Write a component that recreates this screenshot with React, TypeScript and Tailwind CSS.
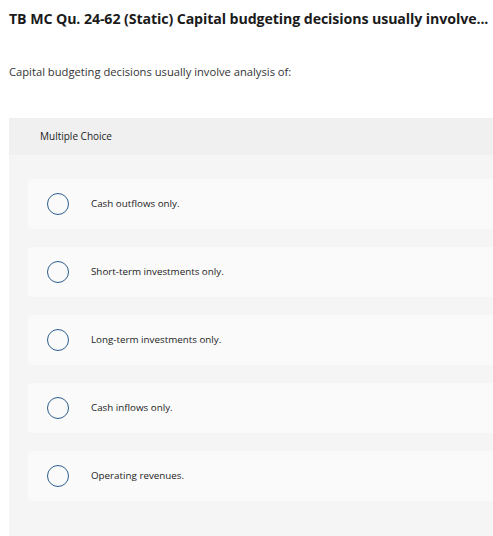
const choices = [
  "Cash outflows only.",
  "Short-term investments only.",
  "Long-term investments only.",
  "Cash inflows only.",
  "Operating revenues.",
];

export default function App() {
  return (
    <div className="w-[493px] h-[536px] overflow-hidden bg-white text-[#1b1b1b]" style={{ fontFamily: "'Open Sans', sans-serif" }}>
      <div className="pl-[9px] pt-[9px]">
        <h1 className="text-[14.2px] font-bold leading-[20px] whitespace-nowrap tracking-[-0.1px]">
          TB MC Qu. 24-62 (Static) Capital budgeting decisions usually involve...
        </h1>
      </div>
      <p className="pl-[9px] mt-[36px] text-[11.2px] leading-[14px] text-[#333]">
        Capital budgeting decisions usually involve analysis of:
      </p>
      <div className="ml-[9px] mt-[39px] bg-[#f5f5f5] min-h-[420px]">
        <div className="h-[37px] bg-[#f0f0f0] flex items-center pl-[31px] text-[10px] text-[#222]">
          Multiple Choice
        </div>
        <div className="pt-[24px] pl-[19px] flex flex-col gap-[18px]">
          {choices.map((c) => (
            <div key={c} className="h-[50px] bg-[#fafafa] rounded-l-[3px] flex items-center">
              <span className="ml-[19px] w-[22px] h-[22px] rounded-full border-[1.5px] border-[#2d5e8e] shrink-0" />
              <span className="ml-[22px] text-[9.8px] text-[#222]">{c}</span>
            </div>
          ))}
        </div>
      </div>
    </div>
  );
}
